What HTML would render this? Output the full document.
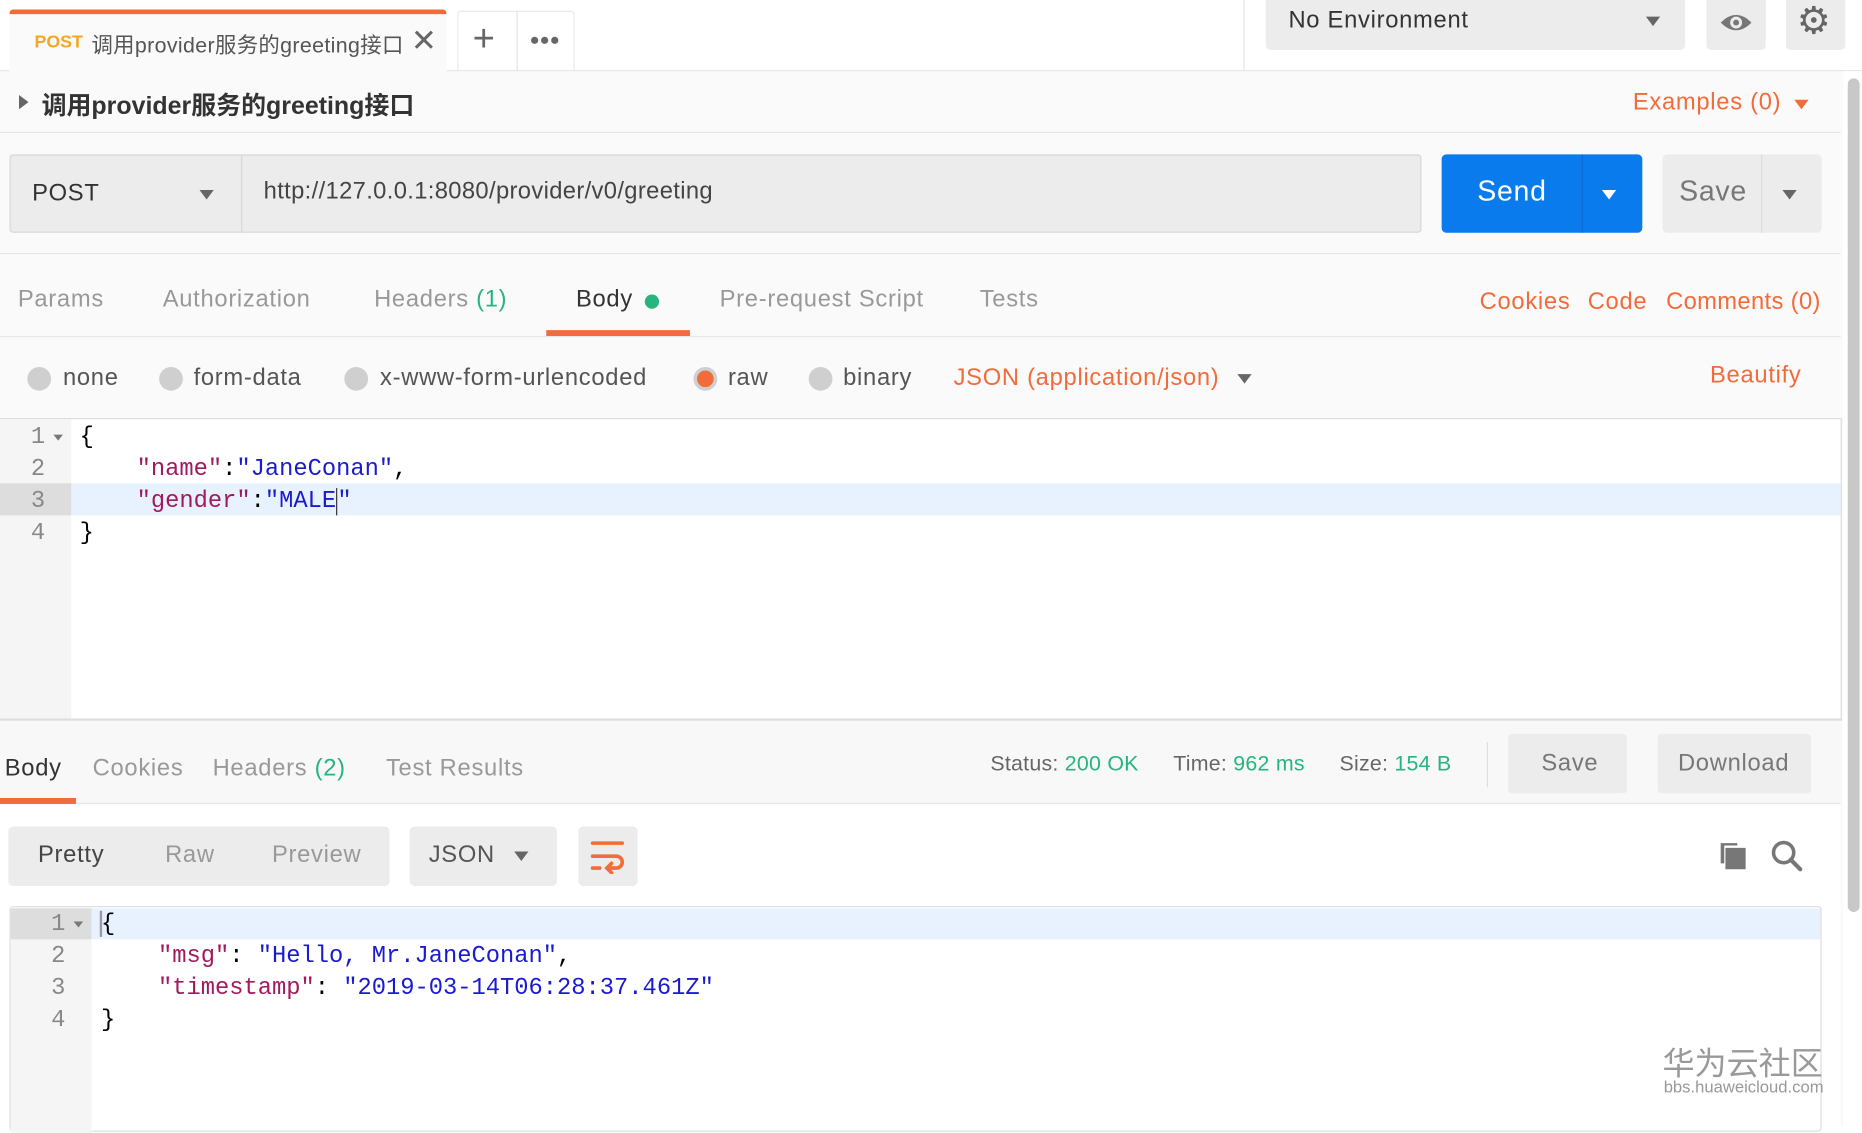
<!DOCTYPE html>
<html><head><meta charset="utf-8">
<style>
*{box-sizing:border-box;margin:0;padding:0}
html,body{width:1862px;height:1126px;overflow:hidden;background:#fff}
#w{position:absolute;left:0;top:0;width:1568px;height:948px;transform:scale(1.1875);transform-origin:0 0;font-family:"Liberation Sans","Noto Sans CJK SC",sans-serif;color:#505050;background:#fafafa;letter-spacing:0.6px}
.a{position:absolute;white-space:nowrap}
.or{color:#f26b3a}
.gr{color:#26b47f}
.g{color:#808080}
.mono{font-family:"Liberation Mono","DejaVu Sans Mono",monospace;font-size:20px;letter-spacing:0}
.tri{position:absolute;width:0;height:0;border-left:6px solid transparent;border-right:6px solid transparent;border-top:8px solid #666}
.rad{position:absolute;width:20px;height:20px;border-radius:50%;background:#cfcfcf;top:309px}
.k{color:#a11a5d}.s{color:#1a1ad0}
</style></head><body><div id="w">
<!-- top bar -->
<div class="a" style="left:0;top:0;width:1568px;height:60px;background:#fff;border-bottom:1px solid #e6e6e6"></div>
<div class="a" style="left:8px;top:8px;width:368px;height:53px;background:#fafafa;border-top:4px solid #f26b3a;border-radius:3px 3px 0 0"></div>
<div class="a" style="left:29px;top:27px;font-size:15px;font-weight:bold;color:#f5a623;letter-spacing:0">POST</div>
<div class="a" style="left:77px;top:24px;font-size:18px;color:#555;width:262px;overflow:hidden;letter-spacing:0.3px">调用provider服务的greeting接口</div>
<div class="a" style="left:346px;top:19px;font-size:26px;color:#666">✕</div>
<div class="a" style="left:385px;top:9px;width:99px;height:51px;border:1px solid #e6e6e6;border-bottom:none;border-radius:3px 3px 0 0"></div>
<div class="a" style="left:435px;top:9px;width:1px;height:51px;background:#e6e6e6"></div>
<div class="a" style="left:398px;top:14px;font-size:32px;color:#666">+</div>
<div class="a" style="left:446px;top:25px;font-size:14px;color:#666;letter-spacing:0">●●●</div>
<div class="a" style="left:1047px;top:0;width:1px;height:60px;background:#e6e6e6"></div>
<div class="a" style="left:1066px;top:0;width:353px;height:42px;background:#ececec;border-radius:0 0 4px 4px"></div>
<div class="a" style="left:1085px;top:6px;font-size:20px;color:#333">No Environment</div>
<div class="tri" style="left:1386px;top:14px"></div>
<div class="a" style="left:1437px;top:0;width:50px;height:42px;background:#ececec;border-radius:0 0 4px 4px"></div>
<svg class="a" style="left:1447px;top:8px" width="30" height="22" viewBox="0 0 30 22"><path d="M2 11 Q15 -2 28 11 Q15 24 2 11Z" fill="#777"/><circle cx="15" cy="11" r="5" fill="#ececec"/><circle cx="15" cy="11" r="2.5" fill="#777"/></svg>
<div class="a" style="left:1504px;top:0;width:50px;height:42px;background:#ececec;border-radius:0 0 4px 4px"></div>
<div class="a" style="left:1513px;top:-2px;font-size:32px;color:#666">⚙</div>
<!-- name row -->
<div class="a" style="left:0;top:111px;width:1550px;height:1px;background:#e6e6e6"></div>
<div class="a" style="left:16px;top:80px;width:0;height:0;border-top:6px solid transparent;border-bottom:6px solid transparent;border-left:8px solid #666"></div>
<div class="a" style="left:35px;top:73px;font-size:21px;font-weight:bold;color:#333;letter-spacing:0">调用provider服务的greeting接口</div>
<div class="a or" style="left:1375px;top:75px;font-size:20px">Examples (0)</div>
<div class="tri" style="left:1511px;top:84px;border-top-color:#f26b3a"></div>
<!-- url row -->
<div class="a" style="left:8px;top:130px;width:1189px;height:66px;background:#ececec;border:1px solid #d6d6d6;border-radius:3px"></div>
<div class="a" style="left:203px;top:130px;width:1px;height:66px;background:#d6d6d6"></div>
<div class="a" style="left:27px;top:152px;font-size:20px;color:#333">POST</div>
<div class="tri" style="left:168px;top:160px"></div>
<div class="a" style="left:222px;top:150px;font-size:20px;color:#444;letter-spacing:0.3px">http://127.0.0.1:8080/provider/v0/greeting</div>
<div class="a" style="left:1214px;top:130px;width:169px;height:66px;background:#097bed;border-radius:4px"></div>
<div class="a" style="left:1332px;top:130px;width:1px;height:66px;background:#0a6bd0"></div>
<div class="a" style="left:1244px;top:148px;font-size:24px;color:#fff">Send</div>
<div class="tri" style="left:1349px;top:160px;border-top-color:#fff"></div>
<div class="a" style="left:1400px;top:130px;width:134px;height:66px;background:#ececec;border-radius:4px"></div>
<div class="a" style="left:1483px;top:130px;width:1px;height:66px;background:#ddd"></div>
<div class="a" style="left:1414px;top:148px;font-size:24px;color:#777">Save</div>
<div class="tri" style="left:1501px;top:160px"></div>
<div class="a" style="left:0;top:213px;width:1550px;height:1px;background:#e6e6e6"></div>
<!-- tabs -->
<div class="a" style="left:15px;top:241px;font-size:20px;color:#999">Params</div>
<div class="a" style="left:137px;top:241px;font-size:20px;color:#999">Authorization</div>
<div class="a" style="left:315px;top:241px;font-size:20px;color:#999">Headers <span class="gr">(1)</span></div>
<div class="a" style="left:485px;top:241px;font-size:20px;color:#333">Body</div>
<div class="a" style="left:543px;top:248px;width:12px;height:12px;border-radius:50%;background:#26b47f"></div>
<div class="a" style="left:460px;top:278px;width:121px;height:5px;background:#f26b3a"></div>
<div class="a" style="left:606px;top:241px;font-size:20px;color:#999">Pre-request Script</div>
<div class="a" style="left:825px;top:241px;font-size:20px;color:#999">Tests</div>
<div class="a or" style="left:1246px;top:243px;font-size:20px">Cookies</div>
<div class="a or" style="left:1337px;top:243px;font-size:20px">Code</div>
<div class="a or" style="left:1403px;top:243px;font-size:20px;letter-spacing:0.3px">Comments (0)</div>
<div class="a" style="left:0;top:283px;width:1550px;height:1px;background:#e6e6e6"></div>
<!-- radios -->
<div class="rad" style="left:23px"></div><div class="a" style="left:53px;top:307px;font-size:20px;color:#555">none</div>
<div class="rad" style="left:134px"></div><div class="a" style="left:163px;top:307px;font-size:20px;color:#555">form-data</div>
<div class="rad" style="left:290px"></div><div class="a" style="left:320px;top:307px;font-size:20px;color:#555">x-www-form-urlencoded</div>
<div class="rad" style="left:584px;background:#f26b3a;border:3px solid #cfcfcf"></div><div class="a" style="left:613px;top:307px;font-size:20px;color:#555">raw</div>
<div class="rad" style="left:681px"></div><div class="a" style="left:710px;top:307px;font-size:20px;color:#555">binary</div>
<div class="a or" style="left:803px;top:307px;font-size:20px">JSON (application/json)</div>
<div class="tri" style="left:1042px;top:315px"></div>
<div class="a or" style="left:1440px;top:305px;font-size:20px">Beautify</div>
<!-- editor -->
<div class="a" style="left:0;top:352px;width:1551px;height:255px;background:#fff;border-top:1px solid #ddd;border-right:1px solid #ddd;border-bottom:2px solid #ddd"></div>
<div class="a" style="left:0;top:353px;width:60px;height:252px;background:#f5f5f5"></div>
<div class="a" style="left:60px;top:407px;width:1490px;height:27px;background:#e8f2fe"></div>
<div class="a" style="left:0;top:407px;width:60px;height:27px;background:#ddd"></div>
<div class="a mono" style="left:26px;top:355px;line-height:27px;color:#888">1<br>2<br>3<br>4</div>
<div class="a" style="left:45px;top:366px;width:0;height:0;border-left:4px solid transparent;border-right:4px solid transparent;border-top:5px solid #777"></div>
<div class="a mono" style="left:67px;top:355px;line-height:27px;color:#000">{<br>&nbsp;&nbsp;&nbsp;&nbsp;<span class="k">"name"</span>:<span class="s">"JaneConan"</span>,<br>&nbsp;&nbsp;&nbsp;&nbsp;<span class="k">"gender"</span>:<span class="s">"MALE</span><span style="border-left:1px solid #333"></span><span class="s">"</span><br>}</div>
<!-- response bar -->
<div class="a" style="left:0;top:607px;width:1550px;height:70px;background:#f8f8f8;border-bottom:1px solid #e6e6e6"></div>
<div class="a" style="left:4px;top:636px;font-size:20px;color:#333">Body</div>
<div class="a" style="left:0;top:672px;width:64px;height:5px;background:#f26b3a"></div>
<div class="a" style="left:78px;top:636px;font-size:20px;color:#999">Cookies</div>
<div class="a" style="left:179px;top:636px;font-size:20px;color:#999">Headers <span class="gr">(2)</span></div>
<div class="a" style="left:325px;top:636px;font-size:20px;color:#999">Test Results</div>
<div class="a" style="left:834px;top:633px;font-size:18px;color:#666;letter-spacing:0.2px">Status: <span class="gr">200 OK</span></div>
<div class="a" style="left:988px;top:633px;font-size:18px;color:#666;letter-spacing:0.2px">Time: <span class="gr">962 ms</span></div>
<div class="a" style="left:1128px;top:633px;font-size:18px;color:#666;letter-spacing:0.2px">Size: <span class="gr">154 B</span></div>
<div class="a" style="left:1252px;top:625px;width:1px;height:38px;background:#ddd"></div>
<div class="a" style="left:1270px;top:618px;width:100px;height:50px;background:#ececec;border-radius:3px"></div>
<div class="a" style="left:1298px;top:632px;font-size:20px;color:#777">Save</div>
<div class="a" style="left:1396px;top:618px;width:129px;height:50px;background:#ececec;border-radius:3px"></div>
<div class="a" style="left:1413px;top:632px;font-size:20px;color:#777">Download</div>
<!-- response toolbar -->
<div class="a" style="left:0;top:678px;width:1550px;height:270px;background:#fff"></div>
<div class="a" style="left:7px;top:696px;width:321px;height:50px;background:#ececec;border-radius:4px"></div>
<div class="a" style="left:32px;top:709px;font-size:20px;color:#444">Pretty</div>
<div class="a" style="left:139px;top:709px;font-size:20px;color:#999">Raw</div>
<div class="a" style="left:229px;top:709px;font-size:20px;color:#999">Preview</div>
<div class="a" style="left:345px;top:696px;width:124px;height:50px;background:#ececec;border-radius:4px"></div>
<div class="a" style="left:361px;top:709px;font-size:20px;color:#555">JSON</div>
<div class="tri" style="left:433px;top:717px"></div>
<div class="a" style="left:487px;top:696px;width:50px;height:50px;background:#ececec;border-radius:4px"></div>
<svg class="a" style="left:497px;top:706px" width="30" height="30" viewBox="0 0 30 30"><g stroke="#f26b3a" stroke-width="3" fill="none" stroke-linecap="round"><path d="M2 4H27"/><path d="M2 15H22a5 5 0 0 1 0 10H15"/><path d="M2 25H8"/><path d="M18 21l-4 4 4 4"/></g></svg>
<svg class="a" style="left:1447px;top:707px" width="26" height="26" viewBox="0 0 26 26"><path d="M2 3V20h3V5H16V3Z" fill="#777"/><rect x="6" y="7" width="17" height="18" fill="#777"/></svg>
<svg class="a" style="left:1491px;top:707px" width="28" height="28" viewBox="0 0 28 28"><circle cx="11" cy="11" r="8.5" stroke="#777" stroke-width="3" fill="none"/><path d="M17 17l8 8" stroke="#777" stroke-width="3.5" stroke-linecap="round"/></svg>
<!-- response editor -->
<div class="a" style="left:8px;top:763px;width:1526px;height:190px;border:1px solid #ddd;border-radius:3px;background:#fff"></div>
<div class="a" style="left:9px;top:764px;width:68px;height:190px;background:#f5f5f5"></div>
<div class="a" style="left:77px;top:765px;width:1456px;height:26px;background:#e8f2fe"></div>
<div class="a" style="left:9px;top:765px;width:68px;height:26px;background:#ddd"></div>
<div class="a mono" style="left:43px;top:765px;line-height:27px;color:#888">1<br>2<br>3<br>4</div>
<div class="a" style="left:62px;top:776px;width:0;height:0;border-left:4px solid transparent;border-right:4px solid transparent;border-top:5px solid #777"></div>
<div class="a" style="left:84px;top:767px;width:2px;height:22px;background:#99a"></div>
<div class="a mono" style="left:85px;top:765px;line-height:27px;color:#000">{<br>&nbsp;&nbsp;&nbsp;&nbsp;<span class="k">"msg"</span>: <span class="s">"Hello, Mr.JaneConan"</span>,<br>&nbsp;&nbsp;&nbsp;&nbsp;<span class="k">"timestamp"</span>: <span class="s">"2019-03-14T06:28:37.461Z"</span><br>}</div>
<!-- scrollbar -->
<div class="a" style="left:1552px;top:60px;width:16px;height:888px;background:#fff"></div>
<div class="a" style="left:1556px;top:66px;width:10px;height:702px;background:#c8c8c8;border-radius:5px"></div>
<!-- watermark -->
<div class="a" style="left:1400px;top:874px;font-size:27px;color:#999;letter-spacing:0;font-family:'Noto Sans CJK SC','WenQuanYi Zen Hei',sans-serif">华为云社区</div>
<div class="a" style="left:1401px;top:907px;font-size:14px;color:#999;letter-spacing:0">bbs.huaweicloud.com</div>
</div></body></html>
